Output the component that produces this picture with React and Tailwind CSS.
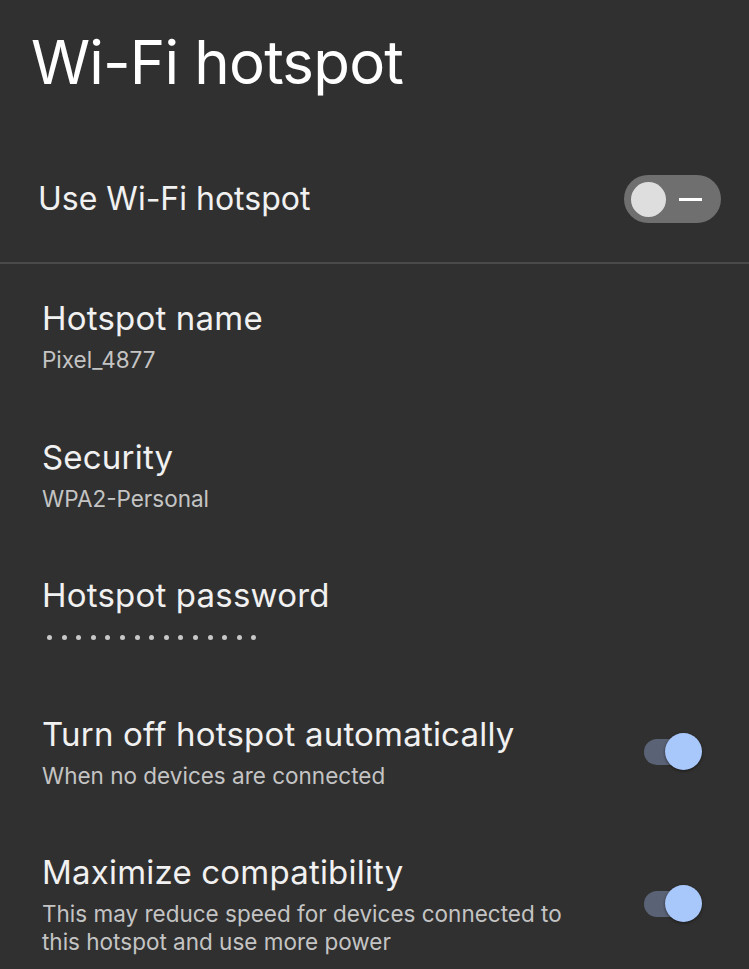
import React from 'react';

const font = { fontFamily: 'Inter, Roboto, sans-serif' };

const OnSwitch = () => (
  <div className="relative w-[58px] h-[38px] flex items-center shrink-0">
    <div className="w-[56px] h-[26px] rounded-full bg-[#5a6275]" />
    <div className="absolute right-0 top-0 w-[37px] h-[37px] rounded-full bg-[#a8c7fa] shadow-[0_1px_3px_rgba(0,0,0,0.5)]" />
  </div>
);

const Item = ({ title, sub, children, toggle }) => (
  <div className="flex items-center pl-[42px] pr-[47px] pt-[34px] pb-[28.5px]">
    <div className="flex-1">
      <div className="text-[33px] leading-[40px] tracking-[0.2px] text-[#f1f1f1]">{title}</div>
      <div className="mt-[8px] text-[22.5px] leading-[28px] text-[#c4c4c4]">{sub || children}</div>
    </div>
    {toggle && <OnSwitch />}
  </div>
);

export default function App() {
  return (
    <div className="w-[749px] h-[969px] bg-[#303030] overflow-hidden" style={font}>
      <div className="h-[150px] pl-[31px] pt-[22px]">
        <h1 className="text-[60px] leading-[80px] tracking-[-0.8px] text-white">Wi-Fi hotspot</h1>
      </div>
      <div className="flex items-center justify-between pl-[38px] pr-[28px] h-[98px]">
        <span className="text-[32px] text-[#f1f1f1]">Use Wi-Fi hotspot</span>
        <div className="w-[97px] h-[48px] rounded-full bg-[#6f6f6f] flex items-center px-[7px] gap-[13px]">
          <div className="w-[35px] h-[35px] rounded-full bg-[#dedede]" />
          <div className="w-[23px] h-[3px] bg-white" />
        </div>
      </div>
      <div className="mt-[14px] h-[2px] bg-[#4a4a4a]" />
      <Item title="Hotspot name" sub="Pixel_4877" />
      <Item title="Security" sub="WPA2-Personal" />
      <Item title="Hotspot password">
        <div className="flex gap-[9.6px] items-center h-[28px] pl-[5px]">
          {Array.from({ length: 15 }).map((_, i) => (
            <span key={i} className="w-[5px] h-[5px] rounded-full bg-[#c8c8c8]" />
          ))}
        </div>
      </Item>
      <Item title="Turn off hotspot automatically" sub="When no devices are connected" toggle />
      <Item
        title="Maximize compatibility"
        sub={<>This may reduce speed for devices connected to<br />this hotspot and use more power</>}
        toggle
      />
    </div>
  );
}
